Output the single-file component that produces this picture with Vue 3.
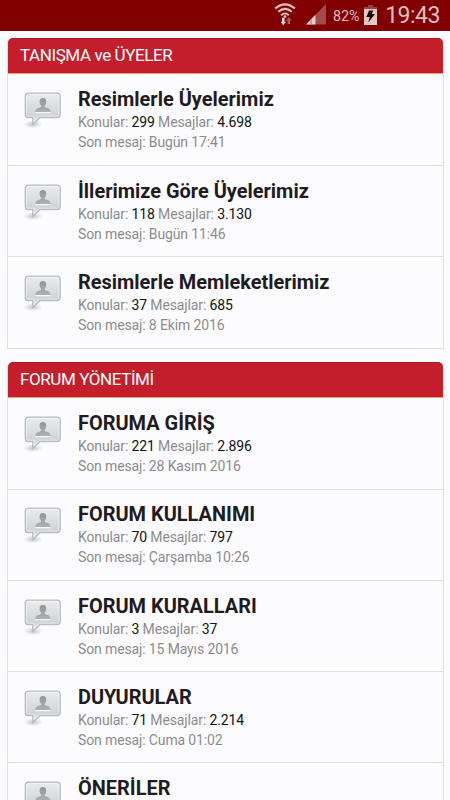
<script setup>
const groups = [
  {
    title: 'TANIŞMA ve ÜYELER',
    forums: [
      { name: 'Resimlerle Üyelerimiz', topics: '299', posts: '4.698', last: 'Bugün 17:41' },
      { name: 'İllerimize Göre Üyelerimiz', topics: '118', posts: '3.130', last: 'Bugün 11:46' },
      { name: 'Resimlerle Memleketlerimiz', topics: '37', posts: '685', last: '8 Ekim 2016' },
    ],
  },
  {
    title: 'FORUM YÖNETİMİ',
    forums: [
      { name: 'FORUMA GİRİŞ', topics: '221', posts: '2.896', last: '28 Kasım 2016' },
      { name: 'FORUM KULLANIMI', topics: '70', posts: '797', last: 'Çarşamba 10:26' },
      { name: 'FORUM KURALLARI', topics: '3', posts: '37', last: '15 Mayıs 2016' },
      { name: 'DUYURULAR', topics: '71', posts: '2.214', last: 'Cuma 01:02' },
      { name: 'ÖNERİLER', topics: '', posts: '', last: '' },
    ],
  },
]
</script>

<template>
  <div class="screen">
    <header class="status">
      <svg class="wifi" width="22" height="24" viewBox="0 0 22 24">
        <g fill="none" stroke="#e3bfbf" stroke-width="2.1">
          <path d="M1.2 5.4Q11 -2.8 20.8 5.4" />
          <path d="M4.2 8.8Q11 3 17.8 8.8" />
          <path d="M7.2 12.2Q11 8.8 14.8 12.2" />
        </g>
        <circle cx="11" cy="13.6" r="1.4" fill="#e3bfbf" />
        <path d="M8 14.8H10.6V18.7H12L9.3 22.2L6.6 18.7H8Z" fill="#f0dddd" />
        <path d="M14.8 14.2L17.8 17.6H16V21H13.6V17.6H11.8Z" fill="#ae6060" />
      </svg>
      <svg class="signal" width="21" height="21" viewBox="0 0 21 21">
        <path d="M0 20.5L20 0V20.5Z" fill="#a14b4b" />
        <path d="M0 20.5L9.5 10.8V20.5Z" fill="#e8cccc" />
        <path d="M5 15.5V20.5" stroke="#b66c6c" stroke-width="1" />
      </svg>
      <span class="percent">82%</span>
      <svg class="battery" width="13" height="20" viewBox="0 0 13 20">
        <path d="M4 0H9V2H13V5H0V2H4Z" fill="#9b4141" />
        <path d="M0 4H13V20H0Z" fill="#e5c6c6" />
        <path d="M5.1 5.5H9.2L7.8 9H11L4.3 17.5L5.7 12H2.4Z" fill="#170303" />
      </svg>
      <span class="clock">19:43</span>
    </header>

    <svg class="defs" width="0" height="0" aria-hidden="true">
      <defs>
        <linearGradient id="bubbleFill" x1="0" y1="0" x2="0" y2="1">
          <stop offset="0" stop-color="#ebeded" />
          <stop offset="0.7" stop-color="#d0d4d4" />
          <stop offset="1" stop-color="#eef0f0" />
        </linearGradient>
        <linearGradient id="personFill" x1="0" y1="0" x2="0" y2="1">
          <stop offset="0" stop-color="#929696" />
          <stop offset="1" stop-color="#adb1b1" />
        </linearGradient>
        <radialGradient id="shadowFill">
          <stop offset="0" stop-color="#777" stop-opacity="0.4" />
          <stop offset="1" stop-color="#777" stop-opacity="0" />
        </radialGradient>
      </defs>
    </svg>

    <main>
      <section v-for="group in groups" :key="group.title" class="card">
        <h2>{{ group.title }}</h2>
        <article v-for="forum in group.forums" :key="forum.name">
          <svg class="bubble" width="40" height="38" viewBox="0 0 40 38">
            <ellipse cx="10" cy="32.3" rx="9.5" ry="4" fill="url(#shadowFill)" />
            <path d="M5 1.2H34Q37.2 1.2 37.2 4.4V22.5Q37.2 25.5 34 25.5H17L9.8 32.5V25.5H5Q2.3 25.5 2.3 22.5V4.4Q2.3 1.2 5 1.2Z" fill="url(#bubbleFill)" stroke="#b9bcbc" stroke-width="1.3" />
            <path d="M5 2.5H34Q36 2.5 36 4.5V22.3Q36 24.2 34 24.2H16.5L11 29.5V24.2H5Q3.5 24.2 3.5 22.3V4.5Q3.5 2.5 5 2.5Z" fill="none" stroke="#fff" stroke-opacity="0.4" stroke-width="1" />
            <path d="M12.3 20.6H27.5" stroke="#f7f8f8" stroke-width="1.2" />
            <path d="M19.9 6C22.2 6 23.4 7.5 23.2 10C23.1 11.8 22.5 13 21.7 13.7V15.1C24 16.1 27.4 16.1 27.6 20H12.2C12.4 16.1 15.8 16.1 18.1 15.1V13.7C17.3 13 16.7 11.8 16.6 10C16.4 7.5 17.6 6 19.9 6Z" fill="url(#personFill)" />
          </svg>
          <div class="info">
            <h3>{{ forum.name }}</h3>
            <template v-if="forum.topics">
              <p>Konular: <b>{{ forum.topics }}</b> Mesajlar: <b>{{ forum.posts }}</b></p>
              <p>Son mesaj: {{ forum.last }}</p>
            </template>
          </div>
        </article>
      </section>
    </main>
  </div>
</template>

<style>
body { margin: 0; background: #fcfcfe; }
</style>

<style scoped>
.screen {
  width: 450px;
  height: 800px;
  overflow: hidden;
  background: #fcfcfe;
  font-family: Roboto, "Liberation Sans", sans-serif;
}
.status {
  display: flex;
  align-items: flex-start;
  box-sizing: border-box;
  height: 31px;
  padding-left: 274px;
  background: #800000;
  color: #e3bfbf;
  white-space: nowrap;
}
.wifi, .signal, .battery { flex: none; }
.wifi { margin-top: 3px; }
.signal { margin: 4px 0 0 10px; }
.percent { width: 31px; margin: 7px 0 0 6px; font-size: 14.3px; line-height: 19px; }
.battery { margin-top: 5px; }
.clock { margin: 2px 0 0 8.2px; font-size: 23px; line-height: 28px; letter-spacing: -0.5px; }
.defs { display: block; height: 0; }
main { padding: 7px 7px 0; }
.card {
  box-sizing: border-box;
  width: 436.5px;
  margin-bottom: 13.1px;
  border: 1px solid #dde2e6;
  border-top: 0;
  border-radius: 6px 6px 0 0;
}
h2 {
  box-sizing: border-box;
  height: 36px;
  margin: 0;
  padding-left: 12px;
  border-top: 1px solid #b51420;
  border-bottom: 1px solid #eda36c;
  border-radius: 5px 5px 0 0;
  background: #c41e2c;
  color: #fff;
  font-size: 17px;
  font-weight: 400;
  line-height: 33px;
  letter-spacing: -0.41px;
}
article {
  display: flex;
  box-sizing: border-box;
  height: 91.2px;
  padding: 17.5px 0 0 15px;
  border-top: 1px solid #dde2e6;
}
h2 + article { padding-top: 18px; border-top: 0; }
.bubble { flex: none; }
.info { margin: -6px 0 0 15px; }
h3 {
  margin: 0;
  color: #211b1e;
  font-size: 19.95px;
  font-weight: 700;
  line-height: 26px;
  white-space: nowrap;
}
p {
  margin: 0;
  color: #8c8c8c;
  font-size: 14px;
  line-height: 20px;
  letter-spacing: -0.13px;
  white-space: nowrap;
}
b { color: #111; font-weight: 400; }
</style>
